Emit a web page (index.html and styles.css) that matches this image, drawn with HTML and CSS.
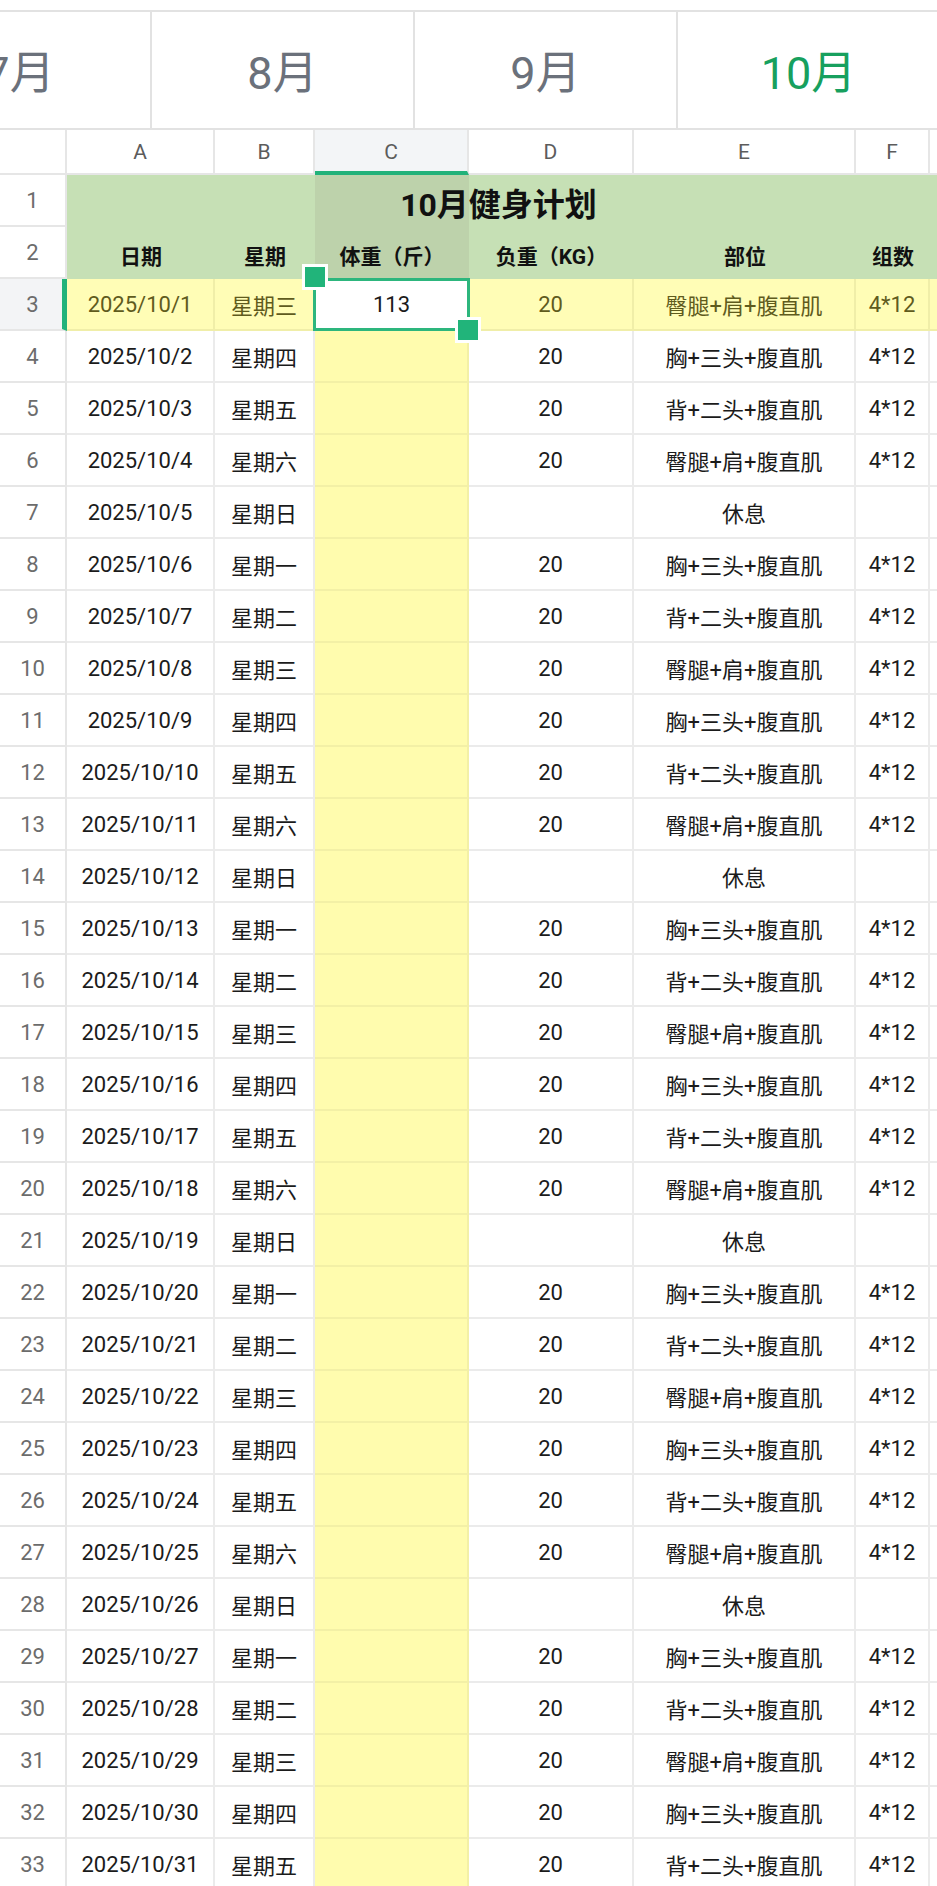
FILE: index.html
```html
<!DOCTYPE html>
<html lang="zh-CN">
<head>
<meta charset="utf-8">
<title>10月健身计划</title>
<link rel="stylesheet" href="styles.css">
</head>
<body>
<div class="tabs">
  <div class="tab">7月</div>
  <div class="tab">8月</div>
  <div class="tab">9月</div>
  <div class="tab active">10月</div>
</div>
<div class="sheet">
  <div class="row colhead">
    <div class="ch"></div><div class="ch">A</div><div class="ch">B</div><div class="ch cur">C</div><div class="ch">D</div><div class="ch">E</div><div class="ch">F</div><div class="ch"></div>
  </div>
  <div class="row">
    <div class="rn">1</div><div class="title">10月健身计划</div><div class="hd"></div>
  </div>
  <div class="row">
    <div class="rn">2</div><div class="hd">日期</div><div class="hd">星期</div><div class="hd hdc">体重（斤）</div><div class="hd">负重（KG）</div><div class="hd">部位</div><div class="hd">组数</div><div class="hd"></div>
  </div>
  <div class="row act">
    <div class="rn rcur">3</div><div class="c">2025/10/1</div><div class="c">星期三</div><div class="c sel">113<span class="h tl"></span><span class="h br"></span></div><div class="c">20</div><div class="c">臀腿+肩+腹直肌</div><div class="c">4*12</div><div class="c"></div>
  </div>
  <div class="row"><div class="rn">4</div><div class="c">2025/10/2</div><div class="c">星期四</div><div class="c w"></div><div class="c">20</div><div class="c">胸+三头+腹直肌</div><div class="c">4*12</div><div class="c"></div></div>
  <div class="row"><div class="rn">5</div><div class="c">2025/10/3</div><div class="c">星期五</div><div class="c w"></div><div class="c">20</div><div class="c">背+二头+腹直肌</div><div class="c">4*12</div><div class="c"></div></div>
  <div class="row"><div class="rn">6</div><div class="c">2025/10/4</div><div class="c">星期六</div><div class="c w"></div><div class="c">20</div><div class="c">臀腿+肩+腹直肌</div><div class="c">4*12</div><div class="c"></div></div>
  <div class="row"><div class="rn">7</div><div class="c">2025/10/5</div><div class="c">星期日</div><div class="c w"></div><div class="c"></div><div class="c">休息</div><div class="c"></div><div class="c"></div></div>
  <div class="row"><div class="rn">8</div><div class="c">2025/10/6</div><div class="c">星期一</div><div class="c w"></div><div class="c">20</div><div class="c">胸+三头+腹直肌</div><div class="c">4*12</div><div class="c"></div></div>
  <div class="row"><div class="rn">9</div><div class="c">2025/10/7</div><div class="c">星期二</div><div class="c w"></div><div class="c">20</div><div class="c">背+二头+腹直肌</div><div class="c">4*12</div><div class="c"></div></div>
  <div class="row"><div class="rn">10</div><div class="c">2025/10/8</div><div class="c">星期三</div><div class="c w"></div><div class="c">20</div><div class="c">臀腿+肩+腹直肌</div><div class="c">4*12</div><div class="c"></div></div>
  <div class="row"><div class="rn">11</div><div class="c">2025/10/9</div><div class="c">星期四</div><div class="c w"></div><div class="c">20</div><div class="c">胸+三头+腹直肌</div><div class="c">4*12</div><div class="c"></div></div>
  <div class="row"><div class="rn">12</div><div class="c">2025/10/10</div><div class="c">星期五</div><div class="c w"></div><div class="c">20</div><div class="c">背+二头+腹直肌</div><div class="c">4*12</div><div class="c"></div></div>
  <div class="row"><div class="rn">13</div><div class="c">2025/10/11</div><div class="c">星期六</div><div class="c w"></div><div class="c">20</div><div class="c">臀腿+肩+腹直肌</div><div class="c">4*12</div><div class="c"></div></div>
  <div class="row"><div class="rn">14</div><div class="c">2025/10/12</div><div class="c">星期日</div><div class="c w"></div><div class="c"></div><div class="c">休息</div><div class="c"></div><div class="c"></div></div>
  <div class="row"><div class="rn">15</div><div class="c">2025/10/13</div><div class="c">星期一</div><div class="c w"></div><div class="c">20</div><div class="c">胸+三头+腹直肌</div><div class="c">4*12</div><div class="c"></div></div>
  <div class="row"><div class="rn">16</div><div class="c">2025/10/14</div><div class="c">星期二</div><div class="c w"></div><div class="c">20</div><div class="c">背+二头+腹直肌</div><div class="c">4*12</div><div class="c"></div></div>
  <div class="row"><div class="rn">17</div><div class="c">2025/10/15</div><div class="c">星期三</div><div class="c w"></div><div class="c">20</div><div class="c">臀腿+肩+腹直肌</div><div class="c">4*12</div><div class="c"></div></div>
  <div class="row"><div class="rn">18</div><div class="c">2025/10/16</div><div class="c">星期四</div><div class="c w"></div><div class="c">20</div><div class="c">胸+三头+腹直肌</div><div class="c">4*12</div><div class="c"></div></div>
  <div class="row"><div class="rn">19</div><div class="c">2025/10/17</div><div class="c">星期五</div><div class="c w"></div><div class="c">20</div><div class="c">背+二头+腹直肌</div><div class="c">4*12</div><div class="c"></div></div>
  <div class="row"><div class="rn">20</div><div class="c">2025/10/18</div><div class="c">星期六</div><div class="c w"></div><div class="c">20</div><div class="c">臀腿+肩+腹直肌</div><div class="c">4*12</div><div class="c"></div></div>
  <div class="row"><div class="rn">21</div><div class="c">2025/10/19</div><div class="c">星期日</div><div class="c w"></div><div class="c"></div><div class="c">休息</div><div class="c"></div><div class="c"></div></div>
  <div class="row"><div class="rn">22</div><div class="c">2025/10/20</div><div class="c">星期一</div><div class="c w"></div><div class="c">20</div><div class="c">胸+三头+腹直肌</div><div class="c">4*12</div><div class="c"></div></div>
  <div class="row"><div class="rn">23</div><div class="c">2025/10/21</div><div class="c">星期二</div><div class="c w"></div><div class="c">20</div><div class="c">背+二头+腹直肌</div><div class="c">4*12</div><div class="c"></div></div>
  <div class="row"><div class="rn">24</div><div class="c">2025/10/22</div><div class="c">星期三</div><div class="c w"></div><div class="c">20</div><div class="c">臀腿+肩+腹直肌</div><div class="c">4*12</div><div class="c"></div></div>
  <div class="row"><div class="rn">25</div><div class="c">2025/10/23</div><div class="c">星期四</div><div class="c w"></div><div class="c">20</div><div class="c">胸+三头+腹直肌</div><div class="c">4*12</div><div class="c"></div></div>
  <div class="row"><div class="rn">26</div><div class="c">2025/10/24</div><div class="c">星期五</div><div class="c w"></div><div class="c">20</div><div class="c">背+二头+腹直肌</div><div class="c">4*12</div><div class="c"></div></div>
  <div class="row"><div class="rn">27</div><div class="c">2025/10/25</div><div class="c">星期六</div><div class="c w"></div><div class="c">20</div><div class="c">臀腿+肩+腹直肌</div><div class="c">4*12</div><div class="c"></div></div>
  <div class="row"><div class="rn">28</div><div class="c">2025/10/26</div><div class="c">星期日</div><div class="c w"></div><div class="c"></div><div class="c">休息</div><div class="c"></div><div class="c"></div></div>
  <div class="row"><div class="rn">29</div><div class="c">2025/10/27</div><div class="c">星期一</div><div class="c w"></div><div class="c">20</div><div class="c">胸+三头+腹直肌</div><div class="c">4*12</div><div class="c"></div></div>
  <div class="row"><div class="rn">30</div><div class="c">2025/10/28</div><div class="c">星期二</div><div class="c w"></div><div class="c">20</div><div class="c">背+二头+腹直肌</div><div class="c">4*12</div><div class="c"></div></div>
  <div class="row"><div class="rn">31</div><div class="c">2025/10/29</div><div class="c">星期三</div><div class="c w"></div><div class="c">20</div><div class="c">臀腿+肩+腹直肌</div><div class="c">4*12</div><div class="c"></div></div>
  <div class="row"><div class="rn">32</div><div class="c">2025/10/30</div><div class="c">星期四</div><div class="c w"></div><div class="c">20</div><div class="c">胸+三头+腹直肌</div><div class="c">4*12</div><div class="c"></div></div>
  <div class="row"><div class="rn">33</div><div class="c">2025/10/31</div><div class="c">星期五</div><div class="c w"></div><div class="c">20</div><div class="c">背+二头+腹直肌</div><div class="c">4*12</div><div class="c"></div></div>
</div>
</body>
</html>
```
FILE: styles.css
```css
html, body {
  margin: 0;
  padding: 0;
  background: #fff;
}
body {
  width: 937px;
  overflow: hidden;
  font-family: Roboto, "Noto Sans CJK SC", sans-serif;
  color: #1b1b1b;
}
.tabs {
  margin-top: 10px;
  margin-left: -111px;
  height: 116px;
  border-top: 2px solid #e2e2e2;
  border-bottom: 2px solid #e2e2e2;
  display: flex;
}
.tab {
  flex: 0 0 263px;
  box-sizing: border-box;
  border-right: 2px solid #e2e2e2;
  display: flex;
  align-items: center;
  justify-content: center;
  font-size: 45px;
  color: #6b717b;
  padding-bottom: 2px;
}
.tab.active {
  color: #17a05e;
}
.sheet {
  width: 937px;
  overflow: hidden;
}
.row {
  display: grid;
  grid-template-columns: 67px 148px 100px 154px 165px 222px 74px 91px;
  width: 1021px;
  height: 52px;
}
.row.colhead {
  height: 45px;
}
.row > div {
  box-sizing: border-box;
  display: flex;
  align-items: center;
  justify-content: center;
  white-space: nowrap;
}
.ch {
  border-right: 2px solid #e6e6e6;
  border-bottom: 2px solid #e6e6e6;
  font-size: 21px;
  color: #5c5c5c;
}
.ch.cur {
  background: #f3f5f7;
  border-bottom: 4px solid #22b27a;
  padding-top: 2px;
}
.rn {
  border-right: 2px solid #e6e6e6;
  border-bottom: 2px solid #e6e6e6;
  font-size: 22px;
  color: #6c6c6c;
}
.rn.rcur {
  background: #f3f4f6;
  border-right: 5px solid #22b27a;
  padding-left: 3px;
}
.title {
  grid-column: 2 / 8;
  font-size: 32px;
  font-weight: 700;
  color: #111;
  background: linear-gradient(to right, #c6e0b5 0, #c6e0b5 248px, #bdd2ab 248px, #bdd2ab 402px, #c6e0b5 402px);
  padding-top: 2px;
}
.hd {
  background: #c6e0b5;
  font-size: 21px;
  font-weight: 700;
  color: #111;
  padding-top: 4px;
}
.hd.hdc {
  background: #bdd2ab;
}
.c {
  border-right: 2px solid #ebebeb;
  border-bottom: 2px solid #ebebeb;
  font-size: 22px;
  color: #1b1b1b;
}
.c.w {
  background: #fffcae;
  border-color: #f3f0a6;
}
.act .c {
  background: #fffdb6;
  color: #5f5b1d;
  border-color: #f0eea8;
}
.act .c.sel {
  position: relative;
  background: #fff;
  color: #1b1b1b;
  border: 3px solid #2db67d;
  margin-left: -2px;
  margin-top: -1px;
  width: 157px;
}
.h {
  position: absolute;
  width: 20px;
  height: 20px;
  background: #21b47a;
  border: 3px solid #fff;
}
.h.tl {
  left: -14px;
  top: -17px;
}
.h.br {
  left: 139px;
  top: 36px;
}
```
